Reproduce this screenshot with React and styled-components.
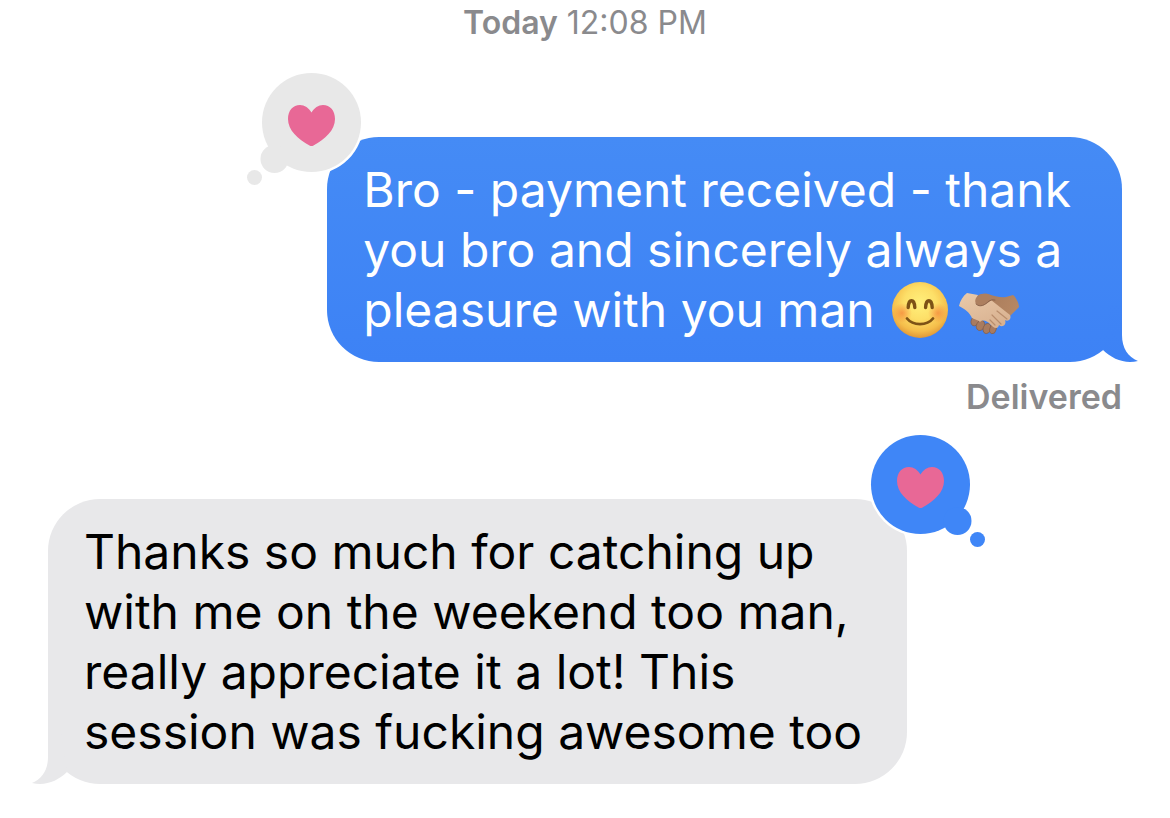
import React from "react";
import styled, { createGlobalStyle } from "styled-components";

const GlobalStyle = createGlobalStyle`
*{
  box-sizing: border-box;
}
body{
  margin: 0;
  background-color: #ffffff;
  font-family: Inter, "Liberation Sans", sans-serif;
}
`;

const Thread = styled.main`
display: flex;
flex-direction: column;
padding: 3px 48px 32px;
`;

const Timestamp = styled.time`
align-self: center;
color: #8a8a8d;
font-size: 32px;
line-height: 40px;
white-space: pre;

b {
  font-weight: 600;
}
`;

const Status = styled.div`
align-self: flex-end;
margin-top: 15px;
color: #8a8a8d;
font-size: 34px;
font-weight: 600;
line-height: 40px;
`;

const Bubble = styled.article`
position: relative;
align-self: ${(props) => (props.$mine ? "flex-end" : "flex-start")};
width: ${(props) => (props.$mine ? "74%" : "80%")};
margin-top: ${(props) => (props.$mine ? "94px" : "82px")};
padding: 23px 36px 22px;
border-radius: 52px;
color: ${(props) => (props.$mine ? "#ffffff" : "#000000")};
background: ${(props) =>
  props.$mine ? "linear-gradient(#458bf5, #3d82f5)" : "#e8e8ea"};
`;

const Text = styled.p`
margin: 0;
font-size: 48px;
line-height: 60px;
`;

const TailSvg = styled.svg`
position: absolute;
bottom: 0;
${(props) => (props.$mine ? "right: -18px;" : "left: -18px;")}
width: 40px;
height: 57px;
transform: ${(props) => (props.$mine ? "none" : "scaleX(-1)")};
`;

const ReactionSvg = styled.svg`
position: absolute;
top: -65px;
${(props) => (props.$mine ? "right: -79px;" : "left: -81px;")}
width: 116px;
height: 114px;
overflow: visible;
fill: ${(props) => (props.$mine ? "#3f86f7" : "#e8e8e8")};
transform: ${(props) => (props.$mine ? "scaleX(-1)" : "none")};
`;

const Emoji = styled.svg`
width: ${(props) => props.$width};
height: 56px;
margin-left: ${(props) => props.$gap};
vertical-align: -11px;
`;

function Tail({ mine }) {
  return (
    <TailSvg $mine={mine} viewBox="0 0 40 57" aria-hidden="true">
      {/* same end colours as the bubble, so the overlap does not show */}
      <path
        fill={mine ? "url(#tailBlue)" : "#e8e8ea"}
        d="M10 0H22V30C22 43 28 52 38 56Q34 57 30 57C20 57 10 52 3 45Z"
      />
      <defs>
        <linearGradient id="tailBlue" gradientUnits="userSpaceOnUse" x1="0" y1="0" x2="0" y2="57">
          <stop offset="0" stopColor="#3f84f5" />
          <stop offset="1" stopColor="#3d82f5" />
        </linearGradient>
      </defs>
    </TailSvg>
  );
}

function HeartReaction({ mine }) {
  return (
    <ReactionSvg $mine={mine} viewBox="0 0 116 114" role="img" aria-label="Loved">
      <circle cx="65.5" cy="50.5" r="52" fill="#ffffff" />
      <circle cx="65.5" cy="50.5" r="49.5" />
      <circle cx="28.5" cy="87" r="14" />
      <circle cx="8.5" cy="105.5" r="7.5" />
      <path
        fill="#e86896"
        d="M65.5 40.5C63 36 58.5 33 54 33C47 33 42 38.5 42 47C42 58 52 67.5 63.5 73.4Q65.5 74.6 67.5 73.4C79 67.5 89 58 89 47C89 38.5 84 33 77 33C72.5 33 68 36 65.5 40.5Z"
      />
    </ReactionSvg>
  );
}

function SmilingFace() {
  return (
    <Emoji $width="56px" $gap="4px" viewBox="0 0 56 56" role="img" aria-label="Smiling face">
      <defs>
        <radialGradient id="face" cx="50%" cy="38%" r="64%">
          <stop offset="0" stopColor="#fff07c" />
          <stop offset="0.45" stopColor="#fddf68" />
          <stop offset="0.78" stopColor="#f5bd4a" />
          <stop offset="1" stopColor="#dc9034" />
        </radialGradient>
        <radialGradient id="cheek">
          <stop offset="0" stopColor="#f5823a" stopOpacity="0.7" />
          <stop offset="1" stopColor="#f5823a" stopOpacity="0" />
        </radialGradient>
      </defs>
      <circle cx="28" cy="28" r="28" fill="url(#face)" />
      <circle cx="10" cy="31" r="10" fill="url(#cheek)" />
      <circle cx="46" cy="31" r="10" fill="url(#cheek)" />
      <g fill="none" stroke="#7d5216" strokeLinecap="round">
        <path strokeWidth="3.4" d="M16.2 25.5C16.6 16.5 22.4 16.5 22.8 25.5" />
        <path strokeWidth="3.4" d="M33.6 25.5C34 16.5 39.8 16.5 40.2 25.5" />
        <path strokeWidth="2.8" d="M15 36.5C21 44 35 44 41 36.5" />
      </g>
    </Emoji>
  );
}

function Handshake() {
  return (
    <Emoji $width="62px" $gap="10px" viewBox="0 0 62 56" role="img" aria-label="Handshake">
      <defs>
        <linearGradient id="lightHand" x1="0" y1="0" x2="0.6" y2="1">
          <stop offset="0" stopColor="#eacaaa" />
          <stop offset="1" stopColor="#d9b291" />
        </linearGradient>
        <linearGradient id="darkHand" x1="0" y1="0" x2="1" y2="0.4">
          <stop offset="0" stopColor="#a5795a" />
          <stop offset="1" stopColor="#b68763" />
        </linearGradient>
      </defs>
      <path
        fill="url(#darkHand)"
        d="M18 16C20 12 25 11 30 12C36 14 43 16 48 15L55 13C57 14 61 21 61 25L53 33L48 38L24 24C18 23 16 20 18 16Z"
      />
      <g fill="#a87b60" stroke="#865d46" strokeWidth="0.7">
        <ellipse cx="17" cy="39" rx="3.8" ry="5" transform="rotate(25 17 39)" />
        <ellipse cx="22.5" cy="43.5" rx="4" ry="5.2" transform="rotate(25 22.5 43.5)" />
        <ellipse cx="29" cy="46.5" rx="3.8" ry="5.2" transform="rotate(20 29 46.5)" />
        <ellipse cx="35" cy="47" rx="3.2" ry="4.8" transform="rotate(15 35 47)" />
      </g>
      <path
        fill="url(#lightHand)"
        d="M1 24C2 19 5 14 9 11L20 13C17 18 19 22 24 23L33 18L52 33C54 37 50 40 47 38C49 43 44 46 41 43C40 48 35 46 32 42C29 39 25 37 22 40C19 37 17 38 14 36C12 31 7 27 1 24Z"
      />
      <path
        fill="#ad7f5f"
        d="M18 16C20 12 25 11 30 12L37 16C32 18 29 23 23 24C18 24 16 20 18 16Z"
      />
      <g fill="none" stroke="#b98d6c" strokeWidth="1.2" strokeLinecap="round">
        <path d="M39 29L49 37" />
        <path d="M34 33L43 42" />
        <path d="M32 38L37 43" />
      </g>
      <path
        fill="none"
        stroke="#87604a"
        strokeWidth="0.9"
        strokeLinecap="round"
        d="M18 22C22 26 27 23 31 19Q34 17 37 18"
      />
    </Emoji>
  );
}

function App() {
  return (
    <>
      <GlobalStyle />
      <Thread>
        <Timestamp><b>Today</b> 12:08 PM</Timestamp>

        <Bubble $mine>
          <Tail mine />
          <Text>
            Bro - payment received - thank you bro and sincerely always a
            pleasure with you man <SmilingFace /><Handshake />
          </Text>
          <HeartReaction />
        </Bubble>
        <Status>Delivered</Status>

        <Bubble>
          <Tail />
          <Text>
            Thanks so much for catching up with me on the weekend too man,
            really appreciate it a lot! This session was fucking awesome too
          </Text>
          <HeartReaction mine />
        </Bubble>
      </Thread>
    </>
  );
}

export default App;
